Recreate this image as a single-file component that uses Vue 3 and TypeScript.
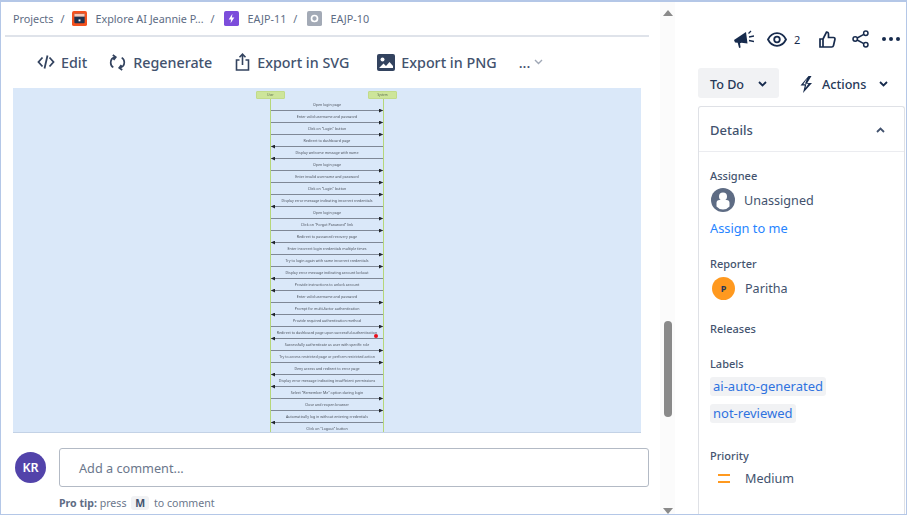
<template>
  <div class="page">
    <!-- 左侧主体 -->
    <main class="main">
      <nav class="crumbs">
        <span>Projects</span><i>/</i>
        <svg class="crumb-ico" viewBox="0 0 16 16">
          <rect width="16" height="16" rx="2" fill="#f4511e" />
          <rect x="2.5" y="3" width="11" height="10" rx="1" fill="#1f3350" />
          <rect x="2.5" y="3" width="11" height="3" fill="#f8c9b8" />
          <rect x="7" y="9" width="2" height="2" fill="#fff" />
        </svg>
        <span>Explore AI Jeannie P...</span><i>/</i>
        <svg class="crumb-ico epic" viewBox="0 0 16 16">
          <rect width="16" height="16" rx="2" fill="#7c4ddb" />
          <path d="M9 3 5 9h2.6L7 13l4-6H8.4z" fill="#fff" />
        </svg>
        <span>EAJP-11</span><i>/</i>
        <svg class="crumb-ico sub" viewBox="0 0 16 16">
          <rect width="16" height="16" rx="2" fill="#a3aab6" />
          <circle cx="8" cy="8" r="3.2" fill="none" stroke="#fff" stroke-width="1.8" />
        </svg>
        <span>EAJP-10</span>
      </nav>

      <div class="toolbar">
        <button class="tool">
          <svg width="18" height="16" viewBox="0 0 18 16" fill="none" stroke="#33435f" stroke-width="1.8">
            <path d="M5.5 3.5 1.5 8l4 4.5M12.500 3.500l4 4.500-4 4.500M10.500 1.500l-3 13" />
          </svg>
          Edit
        </button>
        <button class="tool">
          <svg width="17" height="17" viewBox="0 0 17 17" fill="none" stroke="#33435f" stroke-width="1.7">
            <path d="M6.500 3.200C3.500 3.700 1.700 6 1.700 8.700c0 2 1 3.700 2.600 4.700M3.800 1l3 2.200-2.200 2.800" />
            <path d="M10.500 13.800c3-.5 4.800-2.800 4.800-5.500 0-2-1-3.700-2.600-4.700M13.200 16l-3-2.200 2.200-2.800" />
          </svg>
          Regenerate
        </button>
        <button class="tool">
          <svg width="15" height="18" viewBox="0 0 15 18" fill="none" stroke="#33435f" stroke-width="1.600">
            <path d="M4.500 7H1.500v10h12V7h-3M7.500 12V1.500M4.500 4.200l3-3 3 3" />
          </svg>
          Export in SVG
        </button>
        <button class="tool">
          <svg width="18" height="17" viewBox="0 0 18 17">
            <rect width="18" height="17" rx="2" fill="#33435f" />
            <circle cx="5.500" cy="5.500" r="2" fill="#fff" />
            <path d="M2 14l4.500-4.500 2.500 2.500 3.500-4L16 12v2z" fill="#fff" />
          </svg>
          Export in PNG
        </button>
        <button class="tool more">
          ...
          <svg width="9" height="6" viewBox="0 0 9 6" fill="none" stroke="#a0a8b6" stroke-width="1.400">
            <path d="M1 1l3.500 3.500L8 1" />
          </svg>
        </button>
      </div>

      <!-- 时序图 -->
      <section class="diagram">
        <div class="seq">
          <div class="actors">
            <span class="actor">User</span>
            <span class="actor">System</span>
          </div>
          <div
            v-for="(m, idx) in messages"
            :key="idx"
            class="msg"
            :class="m.dir"
          >
            <span class="msg-text">{{ m.text }}</span>
            <b v-if="idx === 19" class="dot"></b>
          </div>
        </div>
      </section>

      <div class="comment">
        <div class="avatar">KR</div>
        <div class="comment-body">
          <div class="comment-input">Add a comment...</div>
          <p class="tip"><b>Pro tip:</b> press <kbd>M</kbd> to comment</p>
        </div>
      </div>
    </main>

    <!-- 滚动条 -->
    <div class="scrollbar">
      <span class="arrow up"></span>
      <span class="thumb"></span>
      <span class="arrow down"></span>
    </div>

    <!-- 右侧详情 -->
    <aside class="side">
      <div class="side-icons">
        <svg width="20" height="18" viewBox="0 0 20 18" fill="#172b4d">
          <path d="M0 10 12 2l1.500 11.500-6-.8L6 13.200l.6 4.300-1.500.5-1.400-5.300L1 12.500z" />
          <path d="M14.500 3.500 17 1M15 7l5-1M15 10.500l5 1" stroke="#172b4d" stroke-width="1.300" fill="none" />
        </svg>
        <span class="watch">
          <svg width="20" height="15" viewBox="0 0 20 15" fill="none" stroke="#172b4d" stroke-width="1.800">
            <path d="M1 7.500C3 3.500 6 1.200 10 1.200s7 2.300 9 6.300c-2 4-5 6.300-9 6.300S3 11.500 1 7.500z" />
            <circle cx="10" cy="7.500" r="2.800" />
          </svg>
          2
        </span>
        <svg class="like" width="17" height="17" viewBox="0 0 17 17" fill="none" stroke="#172b4d" stroke-width="1.700">
          <path d="M1 8h3v8H1zM4 8l3.500-7c1.300 0 2 1 2 2.200V6.500h5c1 0 1.700.9 1.400 2l-1.400 6c-.2.900-.9 1.500-1.800 1.500H4" />
        </svg>
        <svg class="share" width="17" height="18" viewBox="0 0 17 18" fill="none" stroke="#172b4d" stroke-width="1.500">
          <circle cx="3.200" cy="9" r="2.200" />
          <circle cx="13.800" cy="3.200" r="2.200" />
          <circle cx="13.800" cy="14.800" r="2.200" />
          <path d="M5.200 8 11.800 4.300M5.200 10l6.600 3.700" />
        </svg>
        <span class="dots"><i></i><i></i><i></i></span>
      </div>

      <div class="status-row">
        <button class="status">
          To Do
          <svg width="9" height="6" viewBox="0 0 9 6" fill="none" stroke="#172b4d" stroke-width="1.800"><path d="M1 1l3.500 3.500L8 1" /></svg>
        </button>
        <button class="actions">
          <svg width="13" height="17" viewBox="0 0 13 17" fill="#172b4d"><path d="M8.500 0 .5 9.500h4.300L3 17l9-10H7.300L11.500 0zM7 2.500 5 7.800h3.500L5.500 12l.8-3.800H3.300z" /></svg>
          Actions
          <svg width="9" height="6" viewBox="0 0 9 6" fill="none" stroke="#172b4d" stroke-width="1.800"><path d="M1 1l3.500 3.500L8 1" /></svg>
        </button>
      </div>

      <div class="details">
        <header class="details-head">
          <span>Details</span>
          <svg width="9" height="6" viewBox="0 0 9 6" fill="none" stroke="#42526e" stroke-width="1.800"><path d="M1 5l3.500-3.500L8 5" /></svg>
        </header>

        <div class="details-body">
          <div class="field assignee">
            <label>Assignee</label>
            <div class="value">
              <svg class="user-ico" width="24" height="24" viewBox="0 0 24 24">
                <circle cx="12" cy="12" r="12" fill="#5e6c84" />
                <circle cx="12" cy="8.500" r="4" fill="#fff" />
                <path d="M5.500 15a3 3 0 0 1 3-3h7a3 3 0 0 1 3 3v3.500a8.500 8.500 0 0 1-13 0z" fill="#fff" />
              </svg>
              Unassigned
            </div>
            <a class="assign">Assign to me</a>
          </div>

          <div class="field reporter">
            <label>Reporter</label>
            <div class="value"><span class="rep-avatar">P</span>Paritha</div>
          </div>

          <div class="field releases"><label>Releases</label></div>

          <div class="field labels">
            <label>Labels</label>
            <span class="chip">ai-auto-generated</span>
            <span class="chip">not-reviewed</span>
          </div>

          <div class="field">
            <label>Priority</label>
            <div class="value priority"><span class="equal"></span>Medium</div>
          </div>
        </div>
      </div>
    </aside>
  </div>
</template>

<script setup lang="ts">
interface Message {
  text: string
  dir: 'right' | 'left'
}

// 时序图消息
const messages: Message[] = [
  { text: 'Open login page', dir: 'right' },
  { text: 'Enter valid username and password', dir: 'right' },
  { text: 'Click on "Login" button', dir: 'right' },
  { text: 'Redirect to dashboard page', dir: 'left' },
  { text: 'Display welcome message with name', dir: 'left' },
  { text: 'Open login page', dir: 'right' },
  { text: 'Enter invalid username and password', dir: 'right' },
  { text: 'Click on "Login" button', dir: 'right' },
  { text: 'Display error message indicating incorrect credentials', dir: 'left' },
  { text: 'Open login page', dir: 'right' },
  { text: 'Click on "Forgot Password" link', dir: 'right' },
  { text: 'Redirect to password recovery page', dir: 'left' },
  { text: 'Enter incorrect login credentials multiple times', dir: 'right' },
  { text: 'Try to login again with same incorrect credentials', dir: 'right' },
  { text: 'Display error message indicating account lockout', dir: 'left' },
  { text: 'Provide instructions to unlock account', dir: 'left' },
  { text: 'Enter valid username and password', dir: 'right' },
  { text: 'Prompt for multi-factor authentication', dir: 'left' },
  { text: 'Provide required authentication method', dir: 'right' },
  { text: 'Redirect to dashboard page upon successful authentication', dir: 'left' },
  { text: 'Successfully authenticate as user with specific role', dir: 'right' },
  { text: 'Try to access restricted page or perform restricted action', dir: 'right' },
  { text: 'Deny access and redirect to error page', dir: 'left' },
  { text: 'Display error message indicating insufficient permissions', dir: 'left' },
  { text: 'Select "Remember Me" option during login', dir: 'right' },
  { text: 'Close and reopen browser', dir: 'right' },
  { text: 'Automatically log in without entering credentials', dir: 'left' },
  { text: 'Click on "Logout" button', dir: 'right' },
]
</script>

<style>
html, body { margin: 0; background: #fff; }
</style>

<style scoped>
* { box-sizing: border-box; }

.page {
  width: 907px;
  height: 515px;
  margin: 0;
  display: flex;
  overflow: hidden;
  background: #fff;
  border: 1px solid #b4c7e7;
  border-top-width: 2px;
  font-family: "Noto Sans", "Open Sans", sans-serif;
  color: #42526e;
}

/* 左侧 */
.main {
  width: 659px;
  flex-shrink: 0;
  padding: 0 0 0 4px;
  display: flex;
  flex-direction: column;
}

.crumbs {
  width: 644px;
  height: 35px;
  padding: 0 0 0 8px;
  display: flex;
  align-items: center;
  gap: 8px;
  font-size: 10.800px;
  color: #5e6c84;
  border-bottom: 2px solid #dfe3ea;
}
.crumbs i { font-style: normal; margin-left: -1px; }
.crumb-ico { width: 15px; height: 15px; flex-shrink: 0; }
.crumb-ico.epic { margin: 0 1px; }
.crumb-ico.sub { margin-left: 2px; }

.toolbar {
  height: 51px;
  padding: 0 0 1px 32px;
  display: flex;
  align-items: center;
  gap: 22px;
}
.tool {
  padding: 0;
  border: 0;
  background: none;
  display: flex;
  align-items: center;
  gap: 6px;
  font: 500 14.300px "Noto Sans", "Open Sans", sans-serif;
  color: #42526e;
  white-space: nowrap;
}
.tool:nth-child(2) { gap: 7px; }
.tool:nth-child(3) { gap: 7px; margin-left: 1px; }
.tool:nth-child(4) { margin-left: 6px; }
.tool.more { gap: 4px; margin-left: 0; }

.diagram {
  width: 628px;
  height: 345px;
  margin-left: 8px;
  background: #dae8f9;
  border-bottom: 1px solid #c3d2e6;
  overflow: hidden;
}
.seq {
  width: 114px;
  margin-left: 257px;
  padding-top: 3px;
  filter: blur(0.5px);
}
.actors {
  display: flex;
  justify-content: space-between;
  width: 141px;
  margin-left: -14px;
  height: 8px;
}
.actor {
  width: 29px;
  height: 8px;
  background: #cde59a;
  border: 1px solid #c2db8a;
  border-radius: 1px;
  font-size: 3px;
  line-height: 6px;
  text-align: center;
  color: #5a6a50;
}
.msg {
  position: relative;
  height: 12px;
  border-left: 1px solid #b5d67a;
  border-right: 1px solid #b5d67a;
  display: flex;
  align-items: flex-start;
  justify-content: center;
  box-shadow: inset 0 -1px 0 #7f8896;
}
.msg-text {
  font-size: 3.600px;
  line-height: 6px;
  margin-top: 3px;
  color: #4c525c;
  white-space: nowrap;
}
/* 箭头 */
.msg::after {
  content: "";
  position: absolute;
  bottom: -1.500px;
  width: 4px;
  height: 4px;
  background: #22262c;
}
.msg.right::after { right: 0; clip-path: polygon(0 0, 100% 50%, 0 100%); }
.msg.left::after { left: 0; clip-path: polygon(100% 0, 0 50%, 100% 100%); }
.dot {
  position: absolute;
  right: 5px;
  bottom: 1px;
  width: 4px;
  height: 4px;
  border-radius: 50%;
  background: #e8101c;
}

.comment {
  display: flex;
  padding: 15px 0 0 10px;
  gap: 13px;
}
.avatar {
  width: 31px;
  height: 31px;
  margin-top: 4px;
  border-radius: 50%;
  background: #5243aa;
  color: #fff;
  font-size: 12.500px;
  font-weight: 600;
  display: flex;
  align-items: center;
  justify-content: center;
  flex-shrink: 0;
}
.comment-input {
  width: 590px;
  height: 39px;
  padding-left: 19px;
  border: 1px solid #b3bac5;
  border-radius: 3px;
  font-size: 12.700px;
  line-height: 38px;
  color: #6b778c;
}
.tip {
  margin: 7px 0 0;
  font-size: 10.600px;
  line-height: 18px;
  color: #6b778c;
}
.tip b { color: #5e6c84; }
kbd {
  display: inline-block;
  padding: 0 4px;
  margin: 0 2px;
  background: #f1f2f4;
  border-radius: 3px;
  font: 700 10.500px "Noto Sans", sans-serif;
  color: #42526e;
}

/* 滚动条 */
.scrollbar {
  width: 15px;
  flex-shrink: 0;
  display: flex;
  flex-direction: column;
  align-items: center;
  background: #fbfbfb;
}
.arrow {
  width: 0;
  height: 0;
  flex-shrink: 0;
  border-left: 5px solid transparent;
  border-right: 5px solid transparent;
}
.arrow.up { margin-top: 8px; border-bottom: 6px solid #8a8a8a; }
.arrow.down { margin-top: 91px; border-top: 6px solid #8a8a8a; }
.thumb {
  width: 8px;
  height: 96px;
  flex-shrink: 0;
  margin-top: 305px;
  border-radius: 4px;
  background: #8a8a8a;
}

/* 右侧 */
.side {
  flex: 1;
  min-width: 0;
  padding: 0 0 0 23px;
  display: flex;
  flex-direction: column;
}
.side-icons {
  height: 50px;
  padding: 24px 0 0 36px;
  display: flex;
  align-items: center;
  color: #172b4d;
}
.watch {
  display: flex;
  align-items: center;
  gap: 7px;
  margin-left: 13px;
  font-size: 11px;
}
.like { margin-left: 19px; }
.share { margin-left: 16px; }
.dots { display: flex; gap: 3px; margin-left: 13px; }
.dots i { width: 4px; height: 4px; border-radius: 50%; background: #172b4d; }

.status-row {
  display: flex;
  align-items: center;
  margin-top: 16px;
}
.status, .actions {
  border: 0;
  padding: 0;
  display: flex;
  align-items: center;
  font: 500 12.600px "Noto Sans", "Open Sans", sans-serif;
  color: #253858;
}
.status {
  width: 81px;
  height: 30px;
  padding: 2px 0 0 12px;
  gap: 14px;
  background: #f1f2f4;
  border-radius: 3px;
}
.actions {
  margin-left: 21px;
  padding-top: 2px;
  gap: 13px;
  background: none;
}
.actions svg:first-child { margin-right: -4px; }

.details {
  flex: 1;
  width: 207px;
  margin-top: 8px;
  border: 1px solid #dfe1e6;
  border-bottom: 0;
  border-radius: 3px 3px 0 0;
}
.details-head {
  height: 45px;
  padding: 1px 19px 0 11px;
  display: flex;
  align-items: center;
  justify-content: space-between;
  border-bottom: 1px solid #ebecf0;
  font-size: 13px;
  font-weight: 500;
  color: #42526e;
}
.details-body { padding: 16px 0 0 11px; }
.field label {
  display: block;
  font-size: 11px;
  line-height: 16px;
  font-weight: 500;
  color: #44546f;
}
.value {
  display: flex;
  align-items: center;
  gap: 8px;
  font-size: 12.600px;
  color: #42526e;
}
.assignee .value { margin: 4px 0 0 1px; gap: 9px; }
.assign {
  display: block;
  margin-top: 6px;
  font-size: 12.800px;
  line-height: 20px;
  color: #2684ff;
}
.reporter { margin-top: 18px; }
.reporter .value { margin: 5px 0 0 2px; gap: 10px; }
.rep-avatar {
  width: 23px;
  height: 23px;
  border-radius: 50%;
  background: #ff991f;
  color: #253858;
  font-size: 9px;
  font-weight: 700;
  display: flex;
  align-items: center;
  justify-content: center;
}
.releases { margin-top: 21px; }
.labels { margin-top: 19px; }
.chip {
  display: table;
  margin-top: 5px;
  padding: 0 3px;
  background: #f1f2f4;
  border-radius: 3px;
  font-size: 13px;
  line-height: 19px;
  color: #2f72e0;
}
.chip + .chip { margin-top: 8px; }
.labels + .field { margin-top: 25px; }
.priority { margin: 6px 0 0 8px; gap: 15px; }
.equal {
  width: 12px;
  height: 9px;
  border-top: 2px solid #ff991f;
  border-bottom: 2px solid #ff991f;
}
</style>
